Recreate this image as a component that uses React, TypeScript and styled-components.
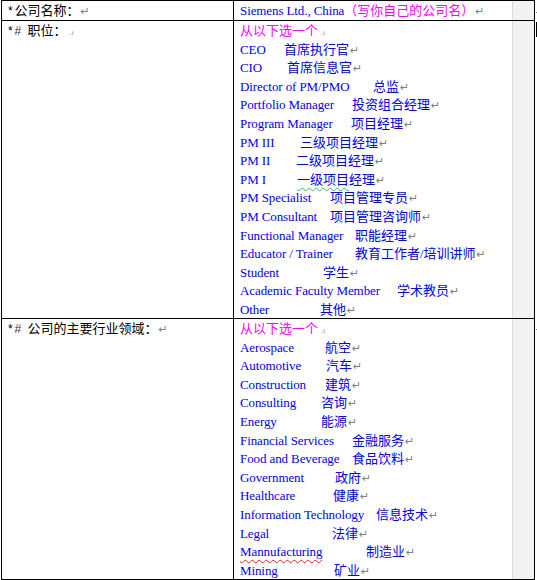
import React from "react";
import styled, { createGlobalStyle } from "styled-components";

const Global = createGlobalStyle`
  html, body { margin: 0; padding: 0; background: #fff; }
  body { width: 537px; height: 580px; overflow: hidden; }
`;

const Page = styled.div`
  position: relative;
  width: 537px;
  height: 580px;
  padding-left: 1px;
  box-sizing: border-box;
`;

const Table = styled.div`
  display: grid;
  grid-template-columns: 231px 300px;
  grid-template-rows: 19px 297px 260px;
  gap: 1px;
  padding: 1px;
  width: 534px;
  box-sizing: border-box;
  background: #000;
`;

const LabelCell = styled.div`
  background: #fff;
  padding-left: 6px;
  font-family: "Noto Sans CJK SC", "Noto Sans", sans-serif;
  font-size: 13px;
  line-height: 18.6px;
  color: #000;
  white-space: nowrap;
`;

const ValueCell = styled.div`
  background: linear-gradient(
    to right,
    #fff 0 278px,
    #dcdcdc 278px 279px,
    #f2f2f2 279px
  );
  padding-left: 6px;
  overflow: hidden;
`;

const Line = styled.div`
  height: 18.6px;
  line-height: 18.6px;
  white-space: nowrap;
`;

const Half = styled.span<{ $c?: string }>`
  display: inline-block;
  width: 6.5px;
  font-family: "Liberation Sans", sans-serif;
  font-size: 12px;
  color: ${(p) => p.$c || "#000"};
`;

const En = styled.span<{ $w?: number }>`
  display: inline-block;
  ${(p) => (p.$w ? `width: ${p.$w}px;` : "")}
  font-family: "Liberation Serif", "Times New Roman", serif;
  font-size: 13px;
  color: #0000ff;
  letter-spacing: -0.1px;
`;

const Zh = styled.span<{ $pink?: boolean }>`
  font-family: "Noto Sans CJK SC", sans-serif;
  font-size: 13px;
  color: ${(p) => (p.$pink ? "#ff00ff" : "#0000ff")};
`;

const Ret = styled.span`
  font-family: "DejaVu Sans", sans-serif;
  font-size: 11px;
  color: #808080;
  margin-left: 1px;
`;

const CellMark = styled.span`
  font-family: "DejaVu Sans", sans-serif;
  font-size: 7px;
  color: #808080;
  margin-left: 3px;
`;

const Squiggle = styled.span<{ $c: string }>`
  text-decoration: underline wavy ${(p) => p.$c};
  text-decoration-thickness: 1px;
  text-underline-offset: 3px;
`;

const RowMark = styled.div<{ $top: number; $h: number; $w: number; $c: string }>`
  position: absolute;
  left: 536px;
  top: ${(p) => p.$top}px;
  width: ${(p) => p.$w}px;
  height: ${(p) => p.$h}px;
  background: ${(p) => p.$c};
`;

type Item = { en: string; at: number; zh: React.ReactNode };

const jobs: Item[] = [
  { en: "CEO", at: 284, zh: "首席执行官" },
  { en: "CIO", at: 287, zh: "首席信息官" },
  { en: "Director of PM/PMO", at: 373, zh: "总监" },
  { en: "Portfolio Manager", at: 352, zh: "投资组合经理" },
  { en: "Program Manager", at: 351, zh: "项目经理" },
  { en: "PM III", at: 300, zh: "三级项目经理" },
  { en: "PM II", at: 296, zh: "二级项目经理" },
  {
    en: "PM I",
    at: 297,
    zh: (
      <>
        <Squiggle $c="#3cb371">一级项目</Squiggle>经理
      </>
    ),
  },
  { en: "PM Specialist", at: 330, zh: "项目管理专员" },
  { en: "PM Consultant", at: 330, zh: "项目管理咨询师" },
  { en: "Functional Manager", at: 355, zh: "职能经理" },
  {
    en: "Educator / Trainer",
    at: 355,
    zh: (
      <>
        教育工作者<En>/</En>培训讲师
      </>
    ),
  },
  { en: "Student", at: 323, zh: "学生" },
  { en: "Academic Faculty Member", at: 397, zh: "学术教员" },
  { en: "Other", at: 320, zh: "其他" },
];

const industries: Item[] = [
  { en: "Aerospace", at: 325, zh: "航空" },
  { en: "Automotive", at: 326, zh: "汽车" },
  { en: "Construction", at: 325, zh: "建筑" },
  { en: "Consulting", at: 321, zh: "咨询" },
  { en: "Energy", at: 321, zh: "能源" },
  { en: "Financial Services", at: 352, zh: "金融服务" },
  { en: "Food and Beverage", at: 352, zh: "食品饮料" },
  { en: "Government", at: 335, zh: "政府" },
  { en: "Healthcare", at: 333, zh: "健康" },
  { en: "Information Technology", at: 376, zh: "信息技术" },
  { en: "Legal", at: 332, zh: "法律" },
  { en: "Mannufacturing", at: 366, zh: "制造业" },
  { en: "Mining", at: 334, zh: "矿业" },
];

const Option = ({ item }: { item: Item }) => (
  <Line>
    <En $w={item.at - 240}>
      {item.en === "Mannufacturing" ? (
        <Squiggle $c="#e02020">{item.en}</Squiggle>
      ) : (
        item.en
      )}
    </En>
    <Zh>{item.zh}</Zh>
    <Ret>↵</Ret>
  </Line>
);

const PickOne = () => (
  <Line>
    <Zh $pink>从以下选一个</Zh>
    <CellMark>.ı</CellMark>
  </Line>
);

export default function App() {
  return (
    <>
      <Global />
      <Page>
        <Table>
          <LabelCell>
            <Half>*</Half>公司名称：<Ret>↵</Ret>
          </LabelCell>
          <ValueCell>
            <Line>
              <En>Siemens Ltd., China</En>
              <Zh $pink>（写你自己的公司名）</Zh>
              <Ret>↵</Ret>
            </Line>
          </ValueCell>

          <LabelCell>
            <Half>*</Half>
            <Half $c="#333">#</Half>
            <Half> </Half>职位：<CellMark>.ı</CellMark>
          </LabelCell>
          <ValueCell>
            <PickOne />
            {jobs.map((j) => (
              <Option key={j.en} item={j} />
            ))}
          </ValueCell>

          <LabelCell>
            <Half>*</Half>
            <Half $c="#333">#</Half>
            <Half> </Half>公司的主要行业领域：<Ret>↵</Ret>
          </LabelCell>
          <ValueCell>
            <PickOne />
            {industries.map((j) => (
              <Option key={j.en} item={j} />
            ))}
          </ValueCell>
        </Table>
        <RowMark $top={12} $h={1} $w={2} $c="#808080" />
        <RowMark $top={22} $h={15} $w={1} $c="#000" />
        <RowMark $top={329} $h={1} $w={1} $c="#808080" />
      </Page>
    </>
  );
}
